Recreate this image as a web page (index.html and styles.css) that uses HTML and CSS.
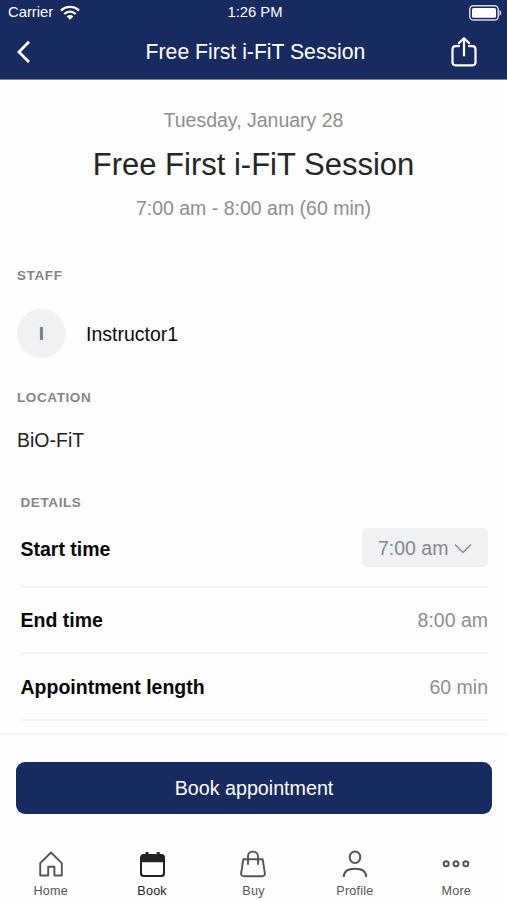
FILE: index.html
```html
<!DOCTYPE html>
<html lang="en">
<head>
<meta charset="utf-8">
<title>Free First i-FiT Session</title>
<link rel="stylesheet" href="styles.css">
</head>
<body>
<div class="app">
  <header class="header">
    <div class="status">
      <div class="carrier">Carrier
        <svg width="20" height="15" viewBox="0 0 20 15" fill="none" stroke="#fff" stroke-width="2.4"><path d="M1 5.6C6 .6 14 .6 19 5.6M4.3 9c3.3-3.2 8.1-3.2 11.4 0"/><path d="M6.7 11.4c1.9-1.8 4.7-1.8 6.6 0L10 14.8z" fill="#fff" stroke="none"/></svg>
      </div>
      <div class="clock">1:26 PM</div>
      <svg class="battery" width="33" height="16" viewBox="0 0 33 16"><rect x=".8" y=".8" width="28.4" height="14.2" rx="3.6" fill="none" stroke="#d5d9e8" stroke-width="1.5"/><rect x="3" y="3" width="24" height="9.8" rx="1.5" fill="#fff"/><path d="M30.5 5c2.4.7 2.4 5 0 5.7z" fill="#d5d9e8"/></svg>
    </div>
    <div class="navbar">
      <svg class="back" width="15" height="24" viewBox="0 0 15 24" fill="none" stroke="#fff" stroke-width="2.8"><path d="M13 1.8 3 12l10 10"/></svg>
      <div class="nav-title">Free First i-FiT Session</div>
      <svg class="share" width="26" height="30" viewBox="0 0 26 30" fill="none" stroke="#fff" stroke-width="2.2" stroke-linecap="round" stroke-linejoin="round"><path d="M8 9.200H4.500A3 3 0 0 0 1.500 12v13.300a3 3 0 0 0 3 3h17a3 3 0 0 0 3-3V12a3 3 0 0 0-3-2.800H18M13 18.500V1.500M7.800 6.200 13 1.200l5.200 5"/></svg>
    </div>
  </header>
  <main class="content">
    <section class="summary">
      <div class="date">Tuesday, January 28</div>
      <h1 class="title">Free First i-FiT Session</h1>
      <div class="time">7:00 am - 8:00 am (60 min)</div>
    </section>
    <section class="block staff">
      <h2 class="label">STAFF</h2>
      <div class="person"><span class="avatar">I</span><span class="name">Instructor1</span></div>
    </section>
    <section class="block location">
      <h2 class="label">LOCATION</h2>
      <div class="place">BiO-FiT</div>
    </section>
    <section class="details">
      <h2 class="label">DETAILS</h2>
      <div class="row start"><b>Start time</b><button class="select">7:00 am<svg width="18" height="11" viewBox="0 0 18 11" fill="none" stroke="#8b8d90" stroke-width="1.5"><path d="m1 1.500 8 8L17 1.500"/></svg></button></div>
      <div class="row"><b>End time</b><span>8:00 am</span></div>
      <div class="row last"><b>Appointment length</b><span>60 min</span></div>
    </section>
  </main>
  <div class="action"><button class="book">Book appointment</button></div>
  <nav class="tabs">
    <a class="tab"><svg width="28" height="28" viewBox="0 0 28 28" fill="none" stroke="#555" stroke-width="1.9" stroke-linejoin="round"><path d="M3.200 13.200 14 2.500l10.800 10.700v12.300h-7.400v-8.700h-6.200v8.700h-8z"/></svg><span>Home</span></a>
    <a class="tab active"><svg width="28" height="28" viewBox="0 0 28 28"><path d="M6 4h1.500V2h3v2h8.200V2h3v2H23.500a3.500 3.500 0 0 1 3.500 3.500v16a3.500 3.500 0 0 1-3.500 3.500h-18a3.500 3.500 0 0 1-3.500-3.500V7.500A3.500 3.500 0 0 1 6 4zM4 12.200V23a2 2 0 0 0 2 2h17a2 2 0 0 0 2-2V12.200z" fill="#232326" fill-rule="evenodd"/></svg><span>Book</span></a>
    <a class="tab"><svg width="28" height="28" viewBox="0 0 28 28" fill="none" stroke="#555" stroke-width="1.900" stroke-linejoin="round" stroke-linecap="round"><path d="M4.300 9.300h19.400l2.200 14.200a2.500 2.500 0 0 1-2.500 2.800H4.600a2.500 2.500 0 0 1-2.500-2.800zM9 14V6.200C9 .1 19 .1 19 6.200V14"/></svg><span>Buy</span></a>
    <a class="tab"><svg width="28" height="28" viewBox="0 0 28 28" fill="none" stroke="#555" stroke-width="2"><ellipse cx="14" cy="7.300" rx="5.300" ry="5.800"/><path d="M2.800 27c0-5.600 4.600-8.300 11.200-8.300S25.200 21.400 25.200 27"/></svg><span>Profile</span></a>
    <a class="tab"><svg width="28" height="28" viewBox="0 0 28 28" fill="none" stroke="#555" stroke-width="2"><circle cx="4.200" cy="13.800" r="2.500"/><circle cx="14" cy="13.800" r="2.500"/><circle cx="23.800" cy="13.800" r="2.500"/></svg><span>More</span></a>
  </nav>
</div>
</body>
</html>
```

FILE: styles.css
```css
* { box-sizing: border-box; }
body { margin: 0; background: #fefefe; font-family: "Liberation Sans", Arial, sans-serif; color: #222; }
h1, h2 { margin: 0; }
button { border: 0; font-family: inherit; }
svg { display: block; flex: none; }
.app { width: 507px; height: 900px; display: flex; flex-direction: column; overflow: hidden; }
.header { height: 80px; background: #172b61; color: #fff; border-bottom: 1px solid #76809f; }
.status { height: 24px; padding: 0 5px 0 8px; display: grid; grid-template-columns: 1fr auto 1fr; align-items: center; font-size: 14.8px; line-height: 25px; }
.carrier { display: flex; align-items: center; gap: 7px; }
.battery { justify-self: end; }
.navbar { height: 55px; padding: 0 30px 0 16px; display: grid; grid-template-columns: 44px 1fr 26px; align-items: center; }
.nav-title { text-align: center; font-size: 21.2px; line-height: 54px; }
.summary { height: 183px; padding-top: 27px; text-align: center; }
.date, .time { font-size: 19.5px; line-height: 26px; color: #8e8e8e; }
.title { margin: 12px 0 10px; font-size: 31px; line-height: 40px; font-weight: 400; color: #262626; }
.label { font-size: 13.5px; line-height: 16px; letter-spacing: .6px; color: #858585; }
.block { padding: 0 17px; }
.staff { padding-top: 5px; height: 122px; }
.person { display: flex; align-items: center; gap: 20px; margin-top: 25px; }
.avatar { width: 49px; height: 49px; border-radius: 50%; background: #eff1f3; color: #77797c; font-size: 19px; font-weight: 700; line-height: 50px; text-align: center; }
.name { font-size: 19.5px; line-height: 26px; color: #0b0b0b; }
.location { padding-top: 5px; height: 105px; }
.place { margin-top: 21px; font-size: 19.5px; line-height: 26px; }
.details { padding: 5px 19px 0 20.5px; }
.row { height: 66px; display: flex; align-items: center; justify-content: space-between; border-bottom: 2px solid #f4f4f4; font-size: 19.5px; color: #8e8e8e; }
.row b { color: #060606; }
.row.start { height: 77px; padding-top: 2px; }
.row.last { height: 67px; padding-top: 1px; }
.select { width: 126px; height: 39px; margin-top: -4px; padding: 1px 16px 0; border-radius: 5px; background: #eff1f3; color: #85888b; font-size: 19.5px; display: flex; align-items: center; justify-content: space-between; }
.content { height: 653px; }
.action { height: 95px; padding: 27px 15px 0 16px; border-top: 2px solid #f3f3f3; }
.book { display: block; width: 476px; height: 52px; border-radius: 9px; background: #172b61; color: #fff; font-size: 19.7px; }
.tabs { height: 72px; display: grid; grid-template-columns: repeat(5, 1fr); }
.tab { padding-top: 22px; display: flex; flex-direction: column; align-items: center; color: #555; font-size: 12.6px; line-height: 15px; letter-spacing: .2px; gap: 6px; }
.active { color: #232326; }
```
